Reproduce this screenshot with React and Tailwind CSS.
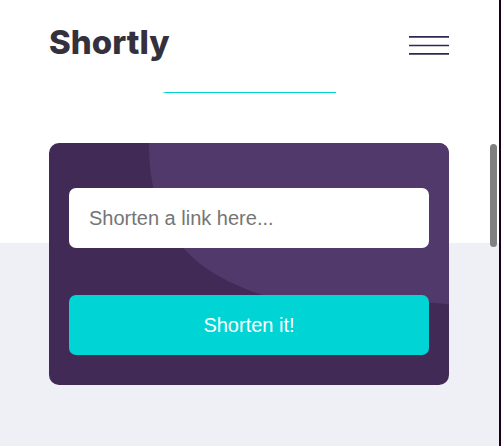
import React from "react";

function Header() {
  return (
    <header className="flex h-[92px] items-start justify-between pt-[22px]">
      <a href="#" className="font-['Inter',sans-serif] text-[33px] leading-10 font-extrabold text-[#34313d]">
        Shortly
      </a>
      <button type="button" aria-label="Open menu" className="mt-[14px] cursor-pointer">
        <svg width="40" height="19" viewBox="0 0 40 19" fill="none" aria-hidden="true">
          <path d="M0 .8H40M0 9.5H40M0 17.8H40" stroke="#2f2b50" strokeWidth="1.7" />
        </svg>
      </button>
    </header>
  );
}

function ShortenForm() {
  return (
    <form
      onSubmit={(e) => e.preventDefault()}
      className="relative flex flex-col gap-[47px] overflow-hidden rounded-[10px] bg-[#412b56] px-5 pt-[45px] pb-[30px]"
    >
      <svg
        className="absolute top-0 right-0"
        width="300"
        height="162"
        viewBox="0 0 300 162"
        aria-hidden="true"
      >
        <path d="M0 0C0 75 30 125 114 152C160 164 240 154 300 161.500V0Z" fill="#513a6b" />
      </svg>
      <input
        type="url"
        aria-label="Link to shorten"
        placeholder="Shorten a link here..."
        className="relative h-[60px] w-full rounded-[7px] bg-white px-5 font-['Liberation_Sans',Arial,sans-serif] text-xl text-[#34313d] outline-none placeholder:text-[#757575]"
      />
      <button
        type="submit"
        className="relative h-[60px] w-full cursor-pointer rounded-[7px] bg-[#00d4d5] font-['Liberation_Sans',Arial,sans-serif] text-xl text-white"
      >
        Shorten it!
      </button>
    </form>
  );
}

export default function App() {
  return (
    <div className="relative flex min-h-screen flex-col border-r-2 border-[#190019] bg-white">
      <div className="pr-[50px] pl-[49px]">
        <Header />
        <div className="mx-auto h-px w-[174px] bg-linear-to-r from-transparent from-0% via-[#00d4d5] via-2% to-[#00d4d5]" />
      </div>
      <main className="mt-[150px] flex-1 bg-[#eff0f5] pr-[50px] pb-[61px] pl-[49px]">
        <div className="-mt-[100px]">
          <ShortenForm />
        </div>
      </main>
      <div className="absolute top-36 right-[2px] h-[103px] w-[7px] rounded-full bg-[#808080]" />
    </div>
  );
}
